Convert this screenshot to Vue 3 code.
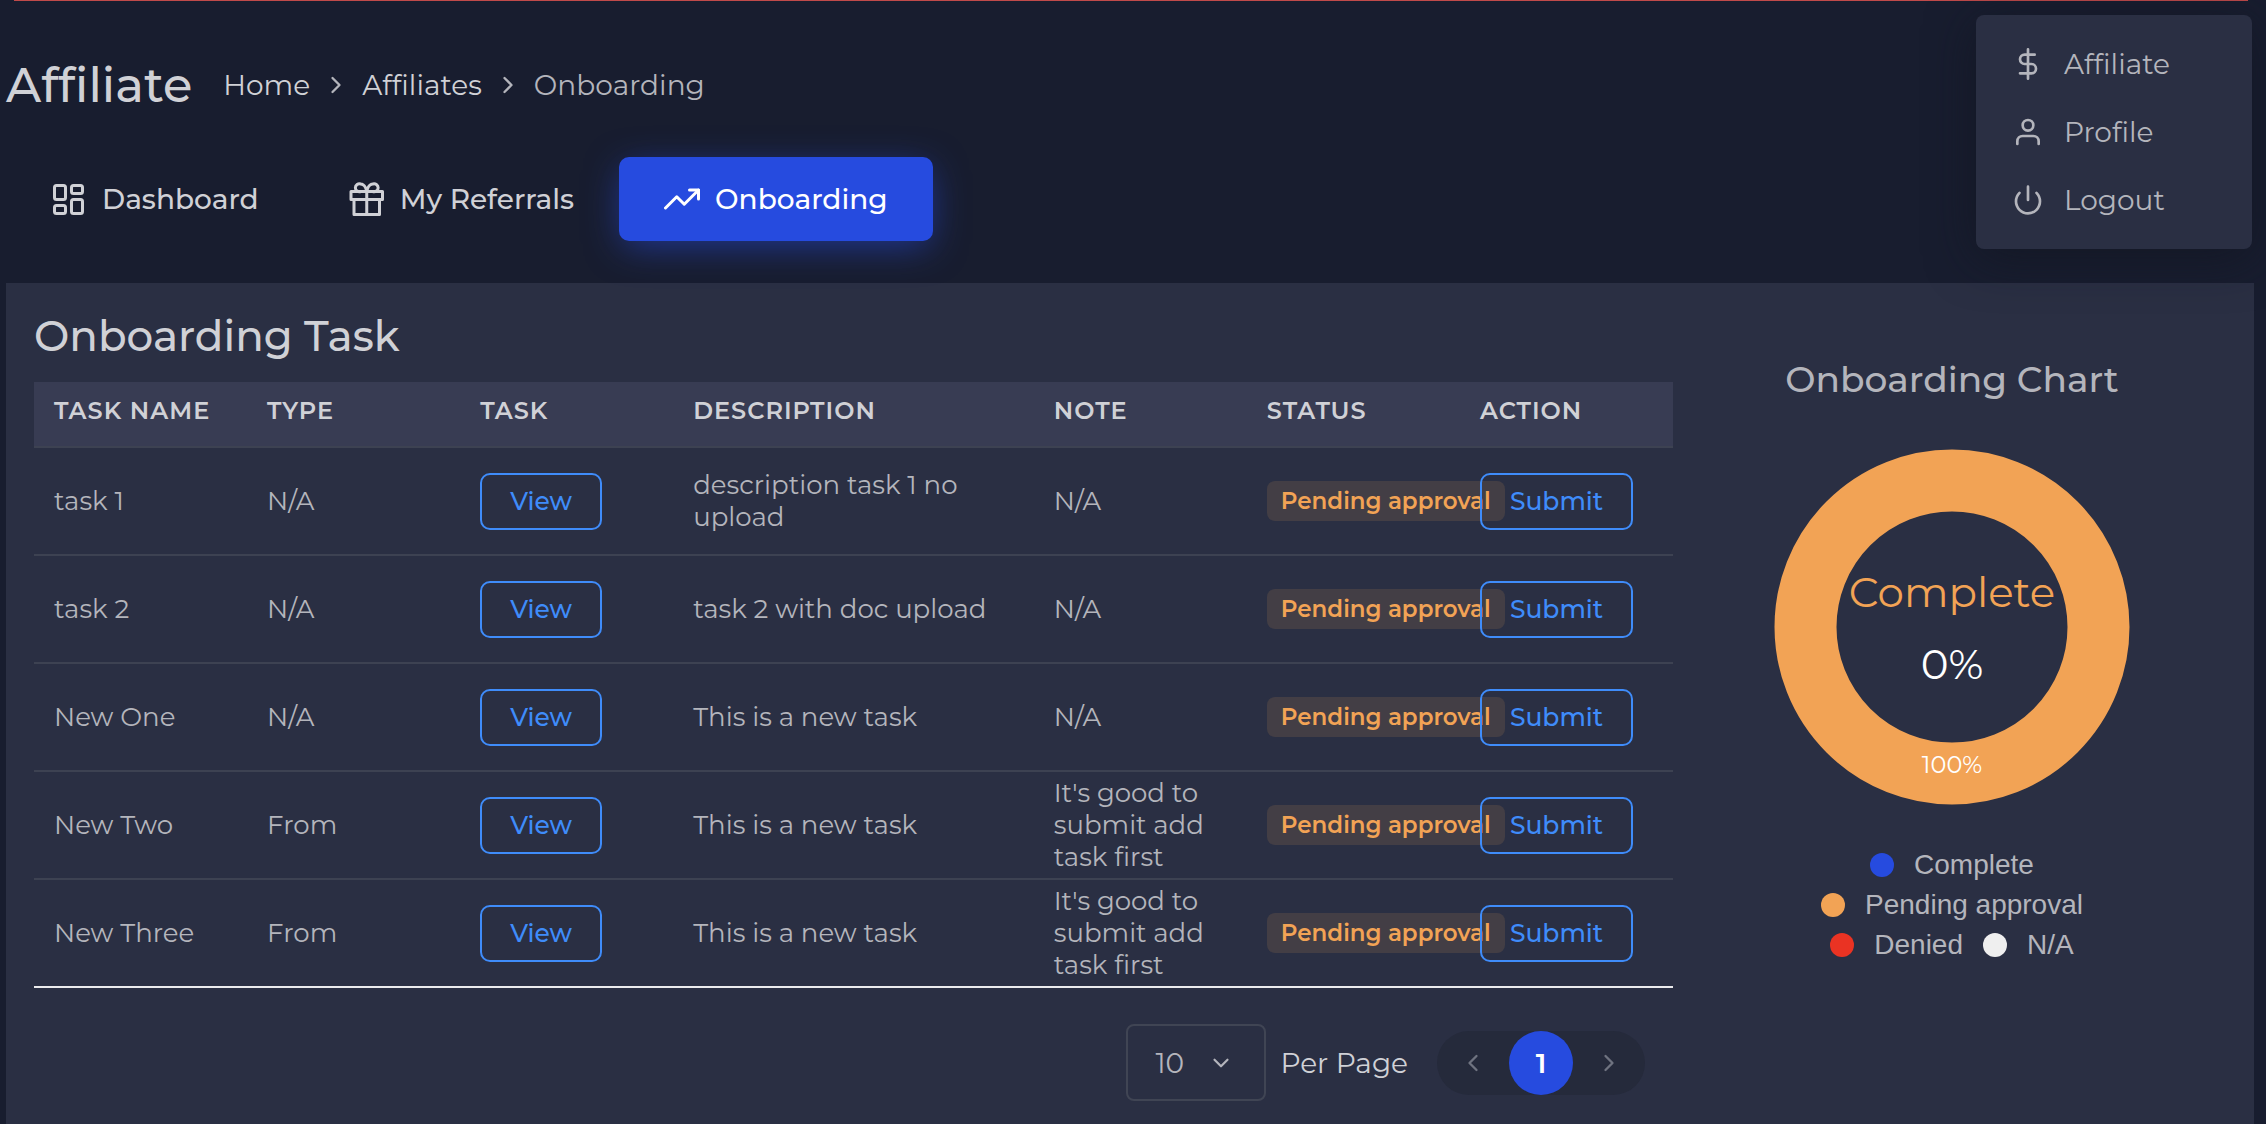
<script setup>
import { ref } from 'vue'

const columns = ['Task Name', 'Type', 'Task', 'Description', 'Note', 'Status', 'Action']

const tasks = [
  { name: 'task 1', type: 'N/A', description: 'description task 1 no upload', note: 'N/A' },
  { name: 'task 2', type: 'N/A', description: 'task 2 with doc upload', note: 'N/A' },
  { name: 'New One', type: 'N/A', description: 'This is a new task', note: 'N/A' },
  { name: 'New Two', type: 'From', description: 'This is a new task', note: "It's good to submit add task first" },
  { name: 'New Three', type: 'From', description: 'This is a new task', note: "It's good to submit add task first" },
]

const legend = [
  { label: 'Complete', tone: 'blue' },
  { label: 'Pending approval', tone: 'orange' },
  { label: 'Denied', tone: 'red' },
  { label: 'N/A', tone: 'white' },
]

const perPage = ref('10')
</script>

<template>
  <div class="page">
    <div class="alert-edge"></div>

    <nav class="user-menu" aria-label="User menu">
      <a href="#affiliate">
        <svg class="icon" viewBox="0 0 24 24"><path d="M12 1v22M17 5H9.5a3.5 3.5 0 0 0 0 7h5a3.5 3.5 0 0 1 0 7H6" /></svg>
        <span>Affiliate</span>
      </a>
      <a href="#profile">
        <svg class="icon" viewBox="0 0 24 24"><path d="M20 21v-2a4 4 0 0 0-4-4H8a4 4 0 0 0-4 4v2" /><circle cx="12" cy="7" r="4" /></svg>
        <span>Profile</span>
      </a>
      <a href="#logout">
        <svg class="icon" viewBox="0 0 24 24"><path d="M18.36 6.64a9 9 0 1 1-12.73 0M12 2v10" /></svg>
        <span>Logout</span>
      </a>
    </nav>

    <header class="page-header">
      <h1>Affiliate</h1>
      <nav class="breadcrumb" aria-label="Breadcrumb">
        <a href="#home">Home</a>
        <svg class="crumb-arrow" viewBox="0 0 24 24"><path d="M9 18l6-6-6-6" /></svg>
        <a href="#affiliates">Affiliates</a>
        <svg class="crumb-arrow" viewBox="0 0 24 24"><path d="M9 18l6-6-6-6" /></svg>
        <span>Onboarding</span>
      </nav>
    </header>

    <nav class="tabs" aria-label="Affiliate sections">
      <a class="tab" href="#dashboard">
        <svg class="tab-icon" viewBox="0 0 36 36">
          <rect x="3.5" y="4.5" width="11" height="14" rx="2" /><rect x="20.5" y="4.5" width="11" height="8" rx="2" />
          <rect x="3.5" y="24.5" width="11" height="8" rx="2" /><rect x="20.5" y="18.5" width="11" height="14" rx="2" />
        </svg>
        <span>Dashboard</span>
      </a>
      <a class="tab" href="#referrals">
        <svg class="tab-icon" viewBox="0 0 36 36">
          <path d="M5 19v14.500h25.500V19M17.750 10.500v23M2 10.500h31.500v8H2zM17.750 10.500h-6a4 4 0 1 1 0-7.500c4.500 0 6 7.500 6 7.500zM17.750 10.500h6a4 4 0 1 0 0-7.500c-4.500 0-6 7.500-6 7.500z" />
        </svg>
        <span>My Referrals</span>
      </a>
      <a class="tab active" href="#onboarding" aria-current="page">
        <svg class="tab-icon" viewBox="0 0 24 24"><path d="M23 6l-9.500 9.500-5-5L1 18" /><path d="M17 6h6v6" /></svg>
        <span>Onboarding</span>
      </a>
    </nav>

    <main class="card">
      <section class="tasks">
        <h2>Onboarding Task</h2>
        <table>
          <colgroup>
            <col class="narrow" /><col class="narrow" /><col class="narrow" /><col class="wide" />
            <col class="narrow" /><col class="narrow" /><col />
          </colgroup>
          <thead>
            <tr><th v-for="column in columns" :key="column" scope="col">{{ column }}</th></tr>
          </thead>
          <tbody>
            <tr v-for="task in tasks" :key="task.name">
              <td>{{ task.name }}</td>
              <td>{{ task.type }}</td>
              <td class="control"><button class="outline" type="button">View</button></td>
              <td>{{ task.description }}</td>
              <td>{{ task.note }}</td>
              <td class="control"><span class="badge">Pending approval</span></td>
              <td class="control"><button class="outline" type="button">Submit</button></td>
            </tr>
          </tbody>
        </table>

        <footer class="pager">
          <div class="select-box">
            <select id="per-page" v-model="perPage">
              <option>10</option>
              <option>25</option>
              <option>50</option>
            </select>
            <svg class="select-arrow" viewBox="0 0 24 24"><path d="M6 9l6 6 6-6" /></svg>
          </div>
          <label for="per-page">Per Page</label>
          <div class="pages">
            <button type="button" aria-label="Previous page"><svg viewBox="0 0 24 24"><path d="M15 18l-6-6 6-6" /></svg></button>
            <button class="current" type="button" aria-current="page">1</button>
            <button type="button" aria-label="Next page"><svg viewBox="0 0 24 24"><path d="M9 18l6-6-6-6" /></svg></button>
          </div>
        </footer>
      </section>

      <section class="chart">
        <h3>Onboarding Chart</h3>
        <svg class="donut" viewBox="0 0 356 356" role="img" aria-label="Pending approval 100%">
          <circle class="ring" cx="178" cy="178" r="146.500" />
          <text class="donut-name" x="178" y="158">Complete</text>
          <text class="donut-value" x="178" y="230">0%</text>
          <text class="donut-share" x="178" y="324">100%</text>
        </svg>
        <ul class="legend">
          <li v-for="item in legend" :key="item.label"><i :class="['dot', item.tone]"></i>{{ item.label }}</li>
        </ul>
      </section>
    </main>
  </div>
</template>

<style>
body {
  margin: 0;
  background: #181d2f;
}
</style>

<style scoped>
* {
  box-sizing: border-box;
}

.page {
  position: relative;
  min-height: 100vh;
  padding: 0 12px 0 6px;
  overflow: hidden;
  background: #181d2f;
  color: #b4b5bc;
  font-family: Montserrat, Inter, sans-serif;
  font-size: 28px;
  line-height: 40px;
}

a {
  color: inherit;
  text-decoration: none;
}

svg {
  flex: none;
  fill: none;
  stroke: currentColor;
  stroke-width: 2;
  stroke-linecap: round;
  stroke-linejoin: round;
}

h1,
h2,
h3,
ul {
  margin: 0;
  padding: 0;
  font-weight: 500;
}

.alert-edge {
  height: 1px;
  margin: 0 6px 0 8px;
  background: #c04a4a;
}

/* User menu */
.user-menu {
  position: absolute;
  top: 15px;
  right: 14px;
  width: 276px;
  padding: 15px 0;
  border-radius: 8px;
  background: #2a2f43;
  box-shadow: 0 8px 48px rgba(16, 20, 30, 0.6);
}

.user-menu a {
  display: flex;
  align-items: center;
  gap: 20px;
  padding: 14px 36px;
}

.icon {
  width: 32px;
  height: 32px;
}

/* Title and breadcrumb */
.page-header {
  display: flex;
  align-items: center;
  height: 168px;
  margin-bottom: -12px;
}

h1 {
  padding-right: 31px;
  color: #d0d1d6;
  font-size: 48px;
  line-height: 60px;
}

.breadcrumb {
  display: flex;
  align-items: center;
  gap: 12px;
}

.breadcrumb a {
  color: #d0d1d6;
}

.crumb-arrow {
  width: 28px;
  height: 28px;
}

/* Tabs */
.tabs {
  display: flex;
  margin-bottom: 42px;
}

.tab {
  display: flex;
  align-items: center;
  gap: 15px;
  height: 84px;
  padding: 0 45px;
  border-radius: 10px;
  color: #d0d1d6;
  font-weight: 500;
}

.tab-icon {
  width: 36px;
  height: 36px;
  stroke-width: 3;
}

.tab.active {
  background: #264bdf;
  color: #fff;
  box-shadow: 0 8px 36px -4px rgba(38, 75, 223, 0.6);
}

.tab.active .tab-icon {
  stroke-width: 2;
}

/* Card */
.card {
  display: flex;
  background: #2a2f43;
}

.tasks {
  flex: 0 0 75%;
  min-width: 0;
  padding: 28px 19px 24px 28px;
}

h2 {
  padding-bottom: 21px;
  color: #d0d1d6;
  font-size: 42px;
  line-height: 50px;
}

table {
  width: 100%;
  table-layout: fixed;
  border-collapse: separate;
  border-spacing: 0;
  font-size: 26px;
  line-height: 32px;
}

.narrow {
  width: 13%;
}

.wide {
  width: 22%;
}

th {
  height: 66px;
  padding: 0 0 6px 20px;
  border-bottom: 2px solid #3d4252;
  background: #383c53;
  color: #d0d1d6;
  font-size: 24px;
  font-weight: 600;
  letter-spacing: 1px;
  text-align: left;
  text-transform: uppercase;
  white-space: nowrap;
}

td {
  height: 108px;
  padding: 0 20px;
  border-bottom: 2px solid #3d4252;
}

tbody tr:last-child td {
  border-bottom-color: #ebebed;
}

td.control {
  padding-right: 0;
  white-space: nowrap;
}

button {
  margin: 0;
  padding: 0;
  border: 0;
  background: none;
  color: inherit;
  font: inherit;
}

.outline {
  position: relative;
  display: block;
  height: 57px;
  padding: 0 28px;
  border: 2px solid #3f8cfa;
  border-radius: 10px;
  color: #3f8cfa;
  font-size: 25px;
  font-weight: 500;
}

.badge {
  display: inline-block;
  padding: 4px 14px;
  border-radius: 8px;
  background: #433e45;
  color: #f2a355;
  font-size: 23px;
  font-weight: 600;
}

/* Pager */
.pager {
  display: flex;
  align-items: center;
  justify-content: flex-end;
  padding: 36px 28px 0 0;
}

.select-box {
  position: relative;
  margin-right: 14px;
}

select {
  display: block;
  width: 140px;
  height: 77px;
  padding: 0 27px;
  border: 2px solid #404554;
  border-radius: 8px;
  appearance: none;
  background: transparent;
  color: #b4b5bc;
  font: inherit;
}

.select-arrow {
  position: absolute;
  top: 26px;
  right: 32px;
  width: 26px;
  height: 26px;
  pointer-events: none;
}

.pager label {
  color: #d0d1d6;
}

.pages {
  display: flex;
  margin-left: 29px;
  border-radius: 32px;
  background: #252a3b;
}

.pages button {
  display: grid;
  place-items: center;
  width: 72px;
  height: 64px;
  color: #6f7380;
}

.pages svg {
  width: 28px;
  height: 28px;
}

.pages .current {
  width: 64px;
  border-radius: 50%;
  background: #264bdf;
  color: #fff;
  font-weight: 600;
}

/* Chart */
.chart {
  display: flex;
  flex: 1;
  flex-direction: column;
  align-items: center;
  padding: 74px 42px 0 0;
}

h3 {
  font-size: 36px;
  line-height: 44px;
}

.donut {
  width: 356px;
  height: 356px;
  margin: 48px 0 40px;
  stroke: none;
}

.ring {
  stroke: #f2a355;
  stroke-width: 62;
}

.donut text {
  stroke: none;
  text-anchor: middle;
}

.donut-name {
  fill: #f2a355;
  font-size: 42px;
}

.donut-value {
  fill: #fff;
  font-size: 42px;
}

.donut-share {
  fill: #fff;
  font-size: 24px;
}

.legend {
  display: flex;
  flex-wrap: wrap;
  justify-content: center;
  column-gap: 20px;
  width: 290px;
  font-family: "Liberation Sans", Arial, sans-serif;
  font-weight: 400;
  list-style: none;
}

.legend li {
  display: flex;
  align-items: center;
  gap: 20px;
}

.dot {
  width: 24px;
  height: 24px;
  border-radius: 50%;
}

.blue {
  background: #264bdf;
}

.orange {
  background: #f2a355;
}

.red {
  background: #ea3323;
}

.white {
  background: #efefef;
}
</style>
